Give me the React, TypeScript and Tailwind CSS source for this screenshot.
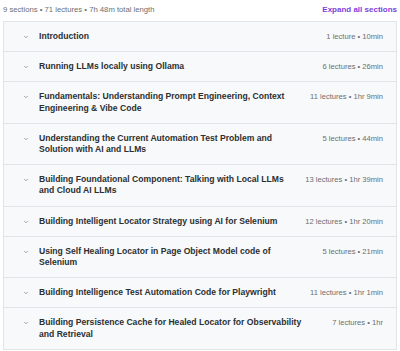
import { ChevronDown } from "lucide-react"

interface Section {
  title: string
  meta: string
}

const sections: Section[] = [
  { title: "Introduction", meta: "1 lecture • 10min" },
  { title: "Running LLMs locally using Ollama", meta: "6 lectures • 26min" },
  {
    title: "Fundamentals: Understanding Prompt Engineering, Context Engineering & Vibe Code",
    meta: "11 lectures • 1hr 9min",
  },
  {
    title: "Understanding the Current Automation Test Problem and Solution with AI and LLMs",
    meta: "5 lectures • 44min",
  },
  {
    title: "Building Foundational Component: Talking with Local LLMs and Cloud AI LLMs",
    meta: "13 lectures • 1hr 39min",
  },
  { title: "Building Intelligent Locator Strategy using AI for Selenium", meta: "12 lectures • 1hr 20min" },
  { title: "Using Self Healing Locator in Page Object Model code of Selenium", meta: "5 lectures • 21min" },
  { title: "Building Intelligence Test Automation Code for Playwright", meta: "11 lectures • 1hr 1min" },
  {
    title: "Building Persistence Cache for Healed Locator for Observability and Retrieval",
    meta: "7 lectures • 1hr",
  },
]

function SectionRow({ title, meta }: Section) {
  return (
    <div className="flex items-start border-t border-[#e1e5e8] first:border-t-0 bg-[#f7f9fa] pl-[19px] pr-[13px] py-[9px]">
      <ChevronDown className="mt-[3px] h-[6px] w-[6px] shrink-0 text-[#6a6f73]" strokeWidth={2.5} />
      <div className="ml-[10px] flex-1 text-[8.6px] font-bold leading-[11.2px] text-[#2d2f31]">{title}</div>
      <div className="ml-4 shrink-0 text-[7.6px] leading-[11.2px] text-[#6a6f73]">{meta}</div>
    </div>
  )
}

export default function App() {
  return (
    <div className="h-[351px] w-[400px] overflow-hidden bg-white px-[3px] pt-[3px] font-['Liberation_Sans',Arial,sans-serif]">
      <div className="flex h-[14px] items-center justify-between">
        <span className="text-[7.7px] text-[#6a6f73]">9 sections • 71 lectures • 7h 48m total length</span>
        <button className="text-[8px] font-bold text-[#7b3fe0]">Expand all sections</button>
      </div>
      <div className="mt-[4px] border border-[#e1e5e8]">
        {sections.map((s) => (
          <SectionRow key={s.title} {...s} />
        ))}
      </div>
    </div>
  )
}
